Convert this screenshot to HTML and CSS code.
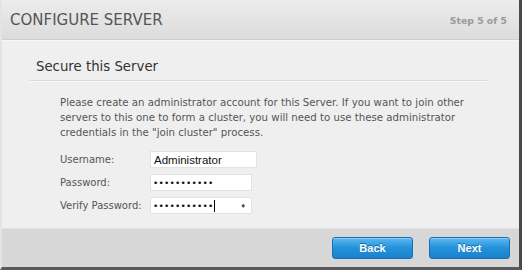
FILE: index.html
```html
<!DOCTYPE html>
<html>
<head>
<meta charset="utf-8">
<link rel="stylesheet" href="styles.css">
</head>
<body>
<div class="window">
  <header class="hd">
    <h1 class="title">CONFIGURE SERVER</h1>
    <span class="step">Step 5 of 5</span>
  </header>
  <main class="content">
    <h2 class="section">Secure this Server</h2>
    <p class="intro">Please create an administrator account for this Server. If you want to join other servers to this one to form a cluster, you will need to use these administrator credentials in the "join cluster" process.</p>
    <div class="form">
      <label class="lbl">Username:</label>
      <div class="field f-user">Administrator</div>
      <label class="lbl">Password:</label>
      <div class="field f-pass">•••••••••••</div>
      <label class="lbl">Verify Password:</label>
      <div class="field f-pass f-verify"><span>•••••••••••<i class="caret"></i></span><span class="key">&#9830;</span></div>
    </div>
  </main>
  <footer class="ft">
    <button class="btn">Back</button>
    <button class="btn">Next</button>
  </footer>
</div>
</body>
</html>
```
FILE: styles.css
```css
* { box-sizing: border-box; }
html, body { margin: 0; padding: 0; background: #ffffff; }
body { width: 526px; height: 272px; overflow: hidden; }

.window {
  width: 522px;
  height: 270px;
  display: flex;
  flex-direction: column;
  border-right: 3px solid #4a4a4e;
  border-bottom: 3px solid #5a5a5e;
  border-left: 2px solid #e4e4e4;
  background: #efefef;
}

.hd {
  height: 40px;
  display: flex;
  align-items: center;
  justify-content: space-between;
  padding: 1px 12px 0 8px;
  background: linear-gradient(#ececec, #dcdcdc);
  border-bottom: 1px solid #cfcfcf;
  box-shadow: 0 1px 0 #f6f6f6;
}
.title {
  margin: 0;
  font-family: "DejaVu Sans", sans-serif;
  font-weight: normal;
  font-size: 15px;
  color: #555;
}
.step {
  font-family: "DejaVu Sans", sans-serif;
  font-weight: bold;
  font-size: 9.3px;
  color: #9a9a9a;
}

.content {
  flex: 1;
  padding: 19px 32px 0 28px;
}
.section {
  margin: 0;
  padding: 0 0 6px 6px;
  font-family: "DejaVu Sans", sans-serif;
  font-weight: normal;
  font-size: 13.3px;
  color: #333;
  border-bottom: 1px solid #dadada;
  box-shadow: 0 1px 0 #fafafa;
}
.intro {
  margin: 14px 0 0 30px;
  font-family: "DejaVu Sans", sans-serif;
  font-size: 10.2px;
  line-height: 15px;
  color: #555;
}
.form {
  margin: 11px 0 0 30px;
  display: grid;
  grid-template-columns: 90px auto;
  grid-auto-rows: 17px;
  row-gap: 6px;
  align-items: center;
  justify-items: start;
}
.lbl {
  font-family: "DejaVu Sans", sans-serif;
  font-size: 10px;
  color: #555;
}
.field {
  height: 17px;
  background: #fff;
  border: 1px solid #e2e2e2;
  font-family: "Liberation Sans", sans-serif;
  font-size: 11.5px;
  color: #111;
  padding: 1px 3px;
  display: flex;
  align-items: center;
  justify-content: space-between;
}
.f-user { width: 107px; }
.f-pass { width: 102px; font-family: "DejaVu Sans", sans-serif; font-size: 9px; letter-spacing: 0.2px; padding-left: 2px; }
.caret { display: inline-block; width: 1px; height: 12px; background: #000; vertical-align: middle; margin-left: 0; }
.key { font-size: 6px; color: #444; margin-right: 2px; }

.ft {
  height: 39px;
  display: flex;
  justify-content: flex-end;
  align-items: center;
  gap: 16px;
  padding: 0 9px 0 0;
  background: #d7d7d7;
  border-top: 1px solid #e2e2e2;
}
.btn {
  width: 81px;
  height: 22px;
  border: 1px solid #1a6fb4;
  border-radius: 3px;
  background: linear-gradient(#5ab9f0, #2491da 50%, #1a82cc);
  color: #fff;
  font-family: "Liberation Sans", sans-serif;
  font-weight: bold;
  font-size: 11px;
  text-shadow: 0 -1px 0 #1766a6;
  box-shadow: inset 0 1px 0 #8ad0f6;
  padding: 0;
}
```
